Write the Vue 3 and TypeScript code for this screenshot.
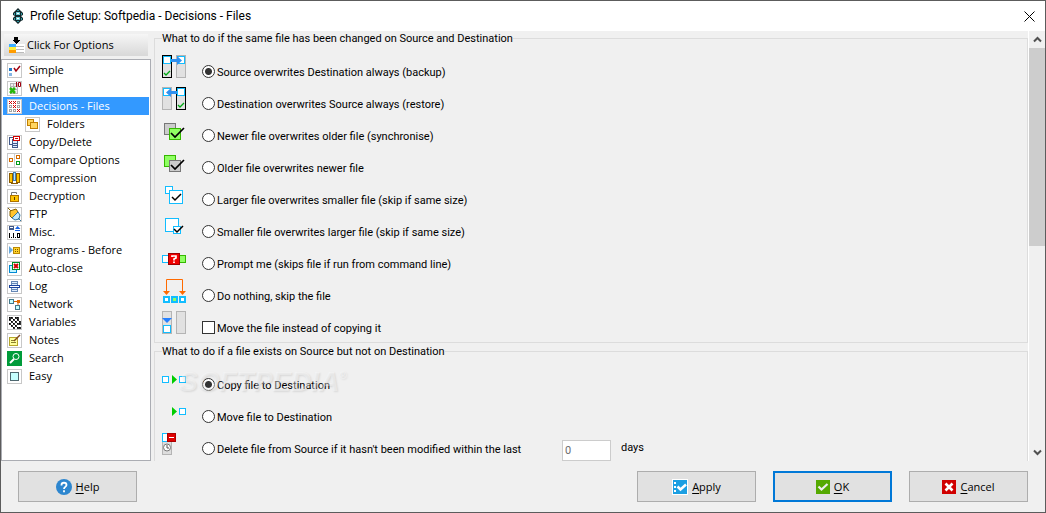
<script setup lang="ts">
import { ref } from 'vue'

interface NavItem { label: string; art: string; child?: boolean }
interface Choice { label: string; art: string }

const sq = (x: number, y: number, s: number, stroke: string, fill: string): string =>
  `<rect x="${x + 0.5}" y="${y + 0.5}" width="${s - 1}" height="${s - 1}" fill="${fill}" stroke="${stroke}"/>`
const box = (x: number, y: number, w: number, h: number, fill: string): string =>
  `<rect x="${x}" y="${y}" width="${w}" height="${h}" fill="${fill}"/>`
const frame = (x: number, y: number, w: number, h: number, stroke: string, fill: string): string =>
  `<rect x="${x + 0.5}" y="${y + 0.5}" width="${w - 1}" height="${h - 1}" fill="${fill}" stroke="${stroke}"/>`
const line = (d: string, stroke: string, w = 1): string =>
  `<path d="${d}" fill="none" stroke="${stroke}" stroke-width="${w}" shape-rendering="auto"/>`
const fill = (d: string, color: string): string => `<path d="${d}" fill="${color}" shape-rendering="auto"/>`

const sky = '#12bdff'
const grayPane = (x: number) => frame(x, 0, 10, 23, '#b4b4b4', '#e1e1e1')
const blackPane = (x: number) => frame(x, 0, 10, 23, '#000', '#e1e1e1')
const lime = '#8fff62'
const limeEdge = '#35b800'

const crosses = ['0,0', '1,1', '2,2', '0,1']
const grid = [0, 1, 2].flatMap(r => [0, 1, 2].map(c => {
  const x = 2 + c * 4
  const y = 2 + r * 4
  return crosses.includes(`${r},${c}`)
    ? line(`M${x} ${y}l3 3m0-3l-3 3`, '#d40000')
    : sq(x, y, 3, '#a5a5a5', '#fff')
})).join('')

const dotCells = [[2, 2], [4, 2], [8, 2], [10, 2], [2, 4], [6, 4], [10, 4], [4, 6], [2, 8], [8, 6], [12, 6], [6, 8], [10, 8], [12, 8], [4, 10], [8, 10], [6, 12], [10, 12], [12, 12]]
const dots = dotCells.map(([x, y]) => `<rect x="${x}" y="${y}" width="1" height="1" stroke="#000" stroke-width=".8"/>`).join('')

const nav: NavItem[] = [
  { label: 'Simple', art: box(2, 5, 3, 3, '#1d78c9') + box(2, 10, 3, 3, '#83b5e6') + line('M7 5l2 3 4-5', '#a00010', 1.5) },
  { label: 'When', art: frame(3, 2, 8, 11, '#b5b5b5', '#eee') + line('M3 5.5h8M3 8.5h8M6.5 3v9', '#b5b5b5') + line('M9.5 1v5M11.5 1.5h2v4h-2z', '#a00010') + line('M3 7l5 5m0-5l-5 5', '#27b80b', 2.5) },
  { label: 'Decisions - Files', art: grid },
  { label: 'Folders', child: true, art: frame(2, 2, 7, 7, '#c28000', '#ffd55f') + frame(5, 5, 8, 7, '#c28000', '#ffd55f') },
  { label: 'Copy/Delete', art: frame(2, 2, 7, 8, '#41598b', '#fff') + frame(5, 4, 6, 9, '#41598b', '#e1ecff') + line('M6 8.5h4M6 10.5h4', '#41598b') + frame(6, 1, 7, 5, '#d40000', '#fff') + box(8, 3, 3, 1, '#d40000') },
  { label: 'Compare Options', art: line('M7.5 1v13', '#ccc') + sq(2, 5, 4, '#d46b00', '#fff') + sq(9, 2, 4, '#d46b00', '#fff') + sq(9, 8, 4, '#009b18', '#fff') },
  { label: 'Compression', art: frame(2, 2, 4, 10, '#8d5d00', '#ffc400') + frame(9, 2, 4, 10, '#8d5d00', '#ffc400') + frame(6, 1, 3, 9, '#3f81bd', '#bce4ff') + line('M4 12.5h7', '#8d5d00') },
  { label: 'Decryption', art: line('M4.5 6V3.5h5V5', '#777') + frame(3, 6, 9, 7, '#ad7200', '#ffc400') + box(7, 8, 1, 3, '#604000') },
  { label: 'FTP', art: fill('M3 4l6-2 2 3-6 6-2-2z', '#ffc52f') + line('M1 1l3 3M3 4l6-2 2 3-6 6-2-2z', '#856000') + fill('M11 5l2 3-1 4-4 1-3-2z', '#bfe9ff') + line('M11 5l2 3-1 4-4 1-3-2zM11 11l3 3', '#31739c') },
  { label: 'Misc.', art: frame(2, 1, 5, 4, '#41598b', '#fff') + line('M3 3.5h3', '#41598b') + fill('M8 4l2.500-3 3 3zM8 5h5v1H8z', '#1763e5') + box(2, 8, 1, 5, '#000') + box(4, 12, 1, 1, '#000') + box(6, 8, 1, 5, '#000') + box(8, 12, 1, 1, '#000') + frame(10, 8, 3, 5, '#000', '#fff') },
  { label: 'Programs - Before', art: fill('M2 3l4 4-4 4z', '#67a8dd') + frame(6, 4, 7, 7, '#bc8900', '#ffd22b') + box(8, 6, 1, 1, '#805700') + box(10, 6, 1, 1, '#805700') + box(8, 8, 1, 1, '#805700') + box(10, 8, 1, 1, '#805700') },
  { label: 'Auto-close', art: frame(2, 4, 8, 8, '#008ad4', '#c2f4ff') + frame(5, 1, 8, 8, '#008c22', '#fff') + line('M7 3l4 4m0-4l-4 4', '#d20000', 2) },
  { label: 'Log', art: frame(4, 2, 7, 11, '#6688b5', '#e1efff') + line('M5 4.5h5M5 10.5h5', '#6688b5') + frame(2, 6, 11, 3, '#1c459e', '#fff') },
  { label: 'Network', art: line('M6 4.500h5v5', '#d46b00') + sq(2, 2, 5, '#41798b', '#c5ffff') + box(10, 3, 3, 3, '#e26c00') + sq(8, 8, 5, '#41798b', '#c5ffff') },
  { label: 'Variables', art: dots },
  { label: 'Notes', art: frame(2, 4, 9, 9, '#b4a52b', '#ffff9c') + line('M4 7.500h4M4 9.500h5', '#8a812b') + line('M7 8l6-6', '#804820', 1.5) },
  { label: 'Search', art: box(0, 0, 15, 15, '#009b3a') + '<circle cx="9" cy="5.500" r="3" fill="none" stroke="#fff" shape-rendering="auto"/>' + line('M7 8l-4 4', '#fff', 2) },
  { label: 'Easy', art: sq(3, 3, 9, '#4f6870', '#c5ffff') },
]

const changed: Choice[] = [
  { label: 'Source overwrites Destination always (backup)', art: blackPane(0) + grayPane(14) + sq(1, 1, 8, sky, '#fff') + sq(15, 1, 8, sky, '#fff') + fill('M9 4h6V1l5 4.500-5 4.500V7H9z', '#3091ef') + line('M2 18l2 2 4-4', '#00a813', 1.3) },
  { label: 'Destination overwrites Source always (restore)', art: grayPane(0) + blackPane(14) + sq(1, 1, 8, sky, '#fff') + sq(15, 1, 8, sky, '#fff') + fill('M15 4H9V1L4 5.500 9 10V7h6z', '#3091ef') + line('M16 18l2 2 4-4', '#00a813', 1.3) },
  { label: 'Newer file overwrites older file (synchronise)', art: sq(2, 4, 12, '#777', '#ccc') + sq(7, 9, 12, limeEdge, lime) + line('M9 14l4 4 9-9', '#000', 1.7) },
  { label: 'Older file overwrites newer file', art: sq(2, 4, 12, limeEdge, lime) + sq(7, 9, 12, '#777', '#ccc') + line('M9 14l4 4 9-9', '#000', 1.7) },
  { label: 'Larger file overwrites smaller file (skip if same size)', art: sq(3, 3, 8, sky, '#fff') + sq(7, 7, 14, sky, '#fff') + line('M10 14l3 3 6-6', '#000', 1.5) },
  { label: 'Smaller file overwrites larger file (skip if same size)', art: sq(3, 3, 14, sky, '#fff') + sq(11, 11, 8, sky, '#fff') + line('M12 14l3 3 6-6', '#000', 1.5) },
  { label: 'Prompt me (skips file if run from command line)', art: sq(0, 8, 8, sky, '#fff') + frame(17, 8, 7, 8, limeEdge, lime) + sq(6, 6, 12, '#9c0000', '#f00000') + line('M10 10V9h4v2l-2 1v1.500M12 14.500v1.500', '#fff', 1.7) },
  { label: 'Do nothing, skip the file', art: line('M4.500 13V.5h16V13', '#ff6a00') + fill('M1 12h7l-3.500 4zM17 12h7l-3.500 4z', '#ff6a00') + box(1, 17, 7, 7, sky) + box(3, 19, 3, 3, '#fff') + box(9, 17, 7, 7, sky) + box(11, 19, 3, 3, lime) + box(17, 17, 7, 7, sky) + box(19, 19, 3, 3, '#fff') },
]
const moveArt = grayPane(0) + grayPane(14) + fill('M0 7h10l-5 5z', '#2680ff') + sq(1, 14, 8, sky, '#fff')
const play = fill('M10 7l5 4.500-5 4.500z', '#00cd00')
const onlySource: Choice[] = [
  { label: 'Copy file to Destination', art: sq(0, 8, 7, sky, '#fff') + play + sq(17, 8, 7, sky, '#fff') },
  { label: 'Move file to Destination', art: play + sq(17, 8, 7, sky, '#fff') },
  { label: "Delete file from Source if it hasn't been modified within the last", art: frame(0, 1, 10, 22, '#b4b4b4', '#ddd') + frame(0, 1, 8, 9, sky, '#fff') + sq(5, 1, 9, '#a00', '#e00000') + box(7, 5, 5, 1, '#fff') + '<circle cx="5" cy="15.500" r="3.500" fill="#fff" stroke="#777" shape-rendering="auto"/>' + line('M5 13v3h2', '#555') },
]

const selected = ref('Decisions - Files')
const changedPick = ref(0)
const sourcePick = ref(0)
const moveFile = ref(false)
const days = ref('0')
</script>

<template>
  <main class="window">
    <header class="titlebar">
      <svg class="logo" width="12" height="16" viewBox="0 0 12 16">
        <path d="M6 0l3 3 2 2v2L9 8l2 2v2l-2 1-3 3-3-3-2-1v-2l2-2-2-1V5l2-2z" fill="#12282c" />
        <path d="M4 4h4v3H4zM4 9h4v3H4z" fill="#6cc8d2" />
        <path d="M2 5h1v2H2zM9 5h1v2H9zM2 10h1v2H2zM9 10h1v2H9zM5 2h2v1H5zM5 13h2v1H5z" fill="#2d96a0" />
        <path d="M5 5h2v1H5zM5 10h2v1H5z" fill="#fff" />
      </svg>
      <h1>Profile Setup: Softpedia - Decisions - Files</h1>
      <button class="close" type="button" aria-label="Close">
        <svg width="11" height="11" viewBox="0 0 11 11"><path d="M.5.5l10 10m0-10l-10 10" stroke="#000" /></svg>
      </button>
    </header>

    <div class="body">
      <aside class="side">
        <button class="options" type="button">
          <svg width="16" height="16" viewBox="0 0 16 16" shape-rendering="crispEdges">
            <path d="M5 0h4v3h2L7 7 3 3h2z" fill="#000" />
            <path d="M0 7h7v3H0z" fill="#3daeff" /><path d="M0 10h7v3H0z" fill="#ffef3a" /><path d="M0 13h7v3H0z" fill="#ff9c00" />
            <path d="M7 7h9v9H7z" fill="#fff" /><path d="M7 9h8v1H7zM7 12h8v1H7zM7 15h8v1H7z" fill="#bbb" />
          </svg>
          Click For Options
        </button>
        <nav class="list" aria-label="Profile settings">
          <button
            v-for="n in nav" :key="n.label" type="button" class="item"
            :class="{ child: n.child, active: selected === n.label }" @click="selected = n.label"
          >
            <svg class="mini" width="15" height="15" viewBox="0 0 15 15" shape-rendering="crispEdges">
              <rect x=".5" y=".5" width="14" height="14" fill="#fff" stroke="#c8c8c8" />
              <g v-html="n.art" />
            </svg>
            {{ n.label }}
          </button>
        </nav>
      </aside>

      <section class="scroller">
        <div class="content">
          <fieldset>
            <legend>What to do if the same file has been changed on Source and Destination</legend>
            <div v-for="(c, i) in changed" :key="c.label" class="row">
              <svg width="24" height="24" viewBox="0 0 24 24" shape-rendering="crispEdges" v-html="c.art" />
              <label><input v-model="changedPick" type="radio" name="changed" :value="i">{{ c.label }}</label>
            </div>
            <div class="row">
              <svg width="24" height="24" viewBox="0 0 24 24" shape-rendering="crispEdges" v-html="moveArt" />
              <label><input v-model="moveFile" type="checkbox">Move the file instead of copying it</label>
            </div>
          </fieldset>
          <fieldset class="second">
            <legend>What to do if a file exists on Source but not on Destination</legend>
            <div v-for="(c, i) in onlySource" :key="c.label" class="row">
              <svg width="24" height="24" viewBox="0 0 24 24" shape-rendering="crispEdges" v-html="c.art" />
              <label :class="{ wide: i === 2 }"><input v-model="sourcePick" type="radio" name="source" :value="i">{{ c.label }}</label>
              <template v-if="i === 2">
                <input id="days" v-model="days" class="days" type="text" disabled>
                <label for="days">days</label>
              </template>
            </div>
            <div class="watermark" aria-hidden="true">SOFTPEDIA<sup>®</sup></div>
          </fieldset>
        </div>
        <div class="bar">
          <button type="button" aria-label="Scroll up"><svg width="9" height="7" viewBox="0 0 9 7"><path d="M1 5.500L4.500 2 8 5.500" fill="none" stroke="#505050" stroke-width="2" /></svg></button>
          <div class="track"><div class="thumb" /></div>
          <button type="button" aria-label="Scroll down"><svg width="9" height="7" viewBox="0 0 9 7"><path d="M1 1.500L4.500 5 8 1.500" fill="none" stroke="#505050" stroke-width="2" /></svg></button>
        </div>
      </section>
    </div>

    <footer class="actions">
      <button type="button" class="action help">
        <svg width="16" height="16" viewBox="0 0 16 16"><circle cx="8" cy="8" r="8" fill="#2d86cf" /><path d="M5.500 6.500V6c0-3 5-3 5 0 0 2-2.500 1.800-2.500 4M8 11.300v1.900" fill="none" stroke="#fff" stroke-width="1.800" /></svg>
        <span><u>H</u>elp</span>
      </button>
      <button type="button" class="action">
        <svg width="16" height="16" viewBox="0 0 16 16"><path d="M0 0h16v16H0z" fill="#fff" /><path d="M1 1h14v14H1z" fill="#1c9fe2" /><path d="M2 3h2v2H2zM2 7h2v2H2zM2 11h2v2H2z" fill="#fff" /><path d="M5.500 7.500l3 3 5.500-5" fill="none" stroke="#fff" stroke-width="2.500" /></svg>
        <span><u>A</u>pply</span>
      </button>
      <button type="button" class="action primary">
        <svg width="14" height="14" viewBox="0 0 14 14"><path d="M0 0h14v14H0z" fill="#55a900" /><path d="M2.500 6.500l3 3 6-5.500" fill="none" stroke="#eee" stroke-width="2.200" /></svg>
        <span><u>O</u>K</span>
      </button>
      <button type="button" class="action">
        <svg width="14" height="14" viewBox="0 0 14 14"><path d="M0 0h14v14H0z" fill="#d00000" /><path d="M3.500 3.500l7 7m0-7l-7 7" stroke="#fff" stroke-width="2.600" /></svg>
        <span><u>C</u>ancel</span>
      </button>
    </footer>
  </main>
</template>

<style>
body { margin: 0; }
</style>

<style scoped>
* { box-sizing: border-box; }
.window {
  height: 100vh;
  display: flex;
  flex-direction: column;
  border: 1px solid #5c5c5c;
  background: #f0f0f0;
  color: #000;
  font: 11px/14px "Open Sans", "Noto Sans", sans-serif;
}
svg { display: block; flex: none; }
button { font: inherit; color: inherit; cursor: default; padding: 0; border: 0; background: none; }
.titlebar { flex: none; height: 30px; display: flex; align-items: center; background: #fff; padding: 0 10px 0 11px; }
.titlebar h1 { margin: 0 0 0 6px; flex: 1; font: 12px/16px Roboto, sans-serif; }
.body { flex: 1; min-height: 0; display: flex; }
.side { flex: none; width: 151px; display: flex; flex-direction: column; }
.options {
  margin: 3px 4px 3px 3px;
  height: 22px;
  padding: 0 5px;
  display: flex;
  align-items: center;
  gap: 2px;
  background: linear-gradient(#f6f6f6, #d8d8d8);
}
.list { flex: 1; min-height: 0; width: 150px; padding: 1px; border: 1px solid #abadb3; background: #fff; display: flex; flex-direction: column; }
.item { height: 18px; padding: 0 4px; display: flex; align-items: center; gap: 7px; text-align: left; }
.child { margin-left: 18px; }
.active { background: #3399ff; color: #fff; }
.scroller { flex: 1; min-width: 0; display: flex; }
.content { flex: 1; min-width: 0; overflow: hidden; padding-left: 2px; font: 11px/16px Roboto, sans-serif; }
fieldset { position: relative; min-width: 0; margin: 0; padding: 10px 7px 7px; border: 1px solid #dcdcdc; }
.second { margin-top: 1px; }
legend { padding: 0; height: 14px; }
.row { display: flex; gap: 16px; height: 24px; }
.row + .row { margin-top: 8px; }
.row label { margin-top: 10px; display: flex; align-items: flex-start; gap: 2px; height: 14px; white-space: nowrap; }
.row .wide { width: 344px; }
.row input[type="radio"], .row input[type="checkbox"] { appearance: none; margin: 0; width: 13px; height: 13px; border: 1px solid #333; background: #fff; }
.row input[type="radio"] { border-radius: 50%; }
.row input[type="radio"]:checked { background: radial-gradient(circle, #333 3px, #fff 4px); }
.row input[type="checkbox"]:checked { background: #333; }
.row .days { flex: none; margin: 8px -6px 0 0; width: 49px; height: 21px; padding: 0 2px; border: 1px solid #ccc; background: #fff; color: #6d6d6d; font: inherit; }
.row .days + label { margin-top: 8px; }
.watermark {
  position: absolute;
  left: 24px;
  top: 8px;
  font: italic bold 28px/32px "Liberation Sans", sans-serif;
  color: rgba(255, 255, 255, 0.4);
  text-shadow: 1px 1px 2px rgba(0, 0, 0, 0.1);
  pointer-events: none;
}
.watermark sup { font-size: 10px; line-height: 10px; vertical-align: 12px; }
.bar { flex: none; width: 17px; border-left: 1px solid #fff; display: flex; flex-direction: column; }
.bar button { height: 17px; display: flex; align-items: center; justify-content: center; }
.track { flex: 1; }
.thumb { height: 50%; max-height: 198px; background: #cdcdcd; }
.actions { flex: none; display: flex; gap: 17px; padding: 10px 17px; }
.action { width: 119px; height: 31px; display: flex; align-items: center; justify-content: center; gap: 4px; border: 1px solid #adadad; background: #e1e1e1; }
.help { margin-right: auto; }
.primary { border: 2px solid #0078d7; }
u { text-underline-offset: 2px; }
</style>
